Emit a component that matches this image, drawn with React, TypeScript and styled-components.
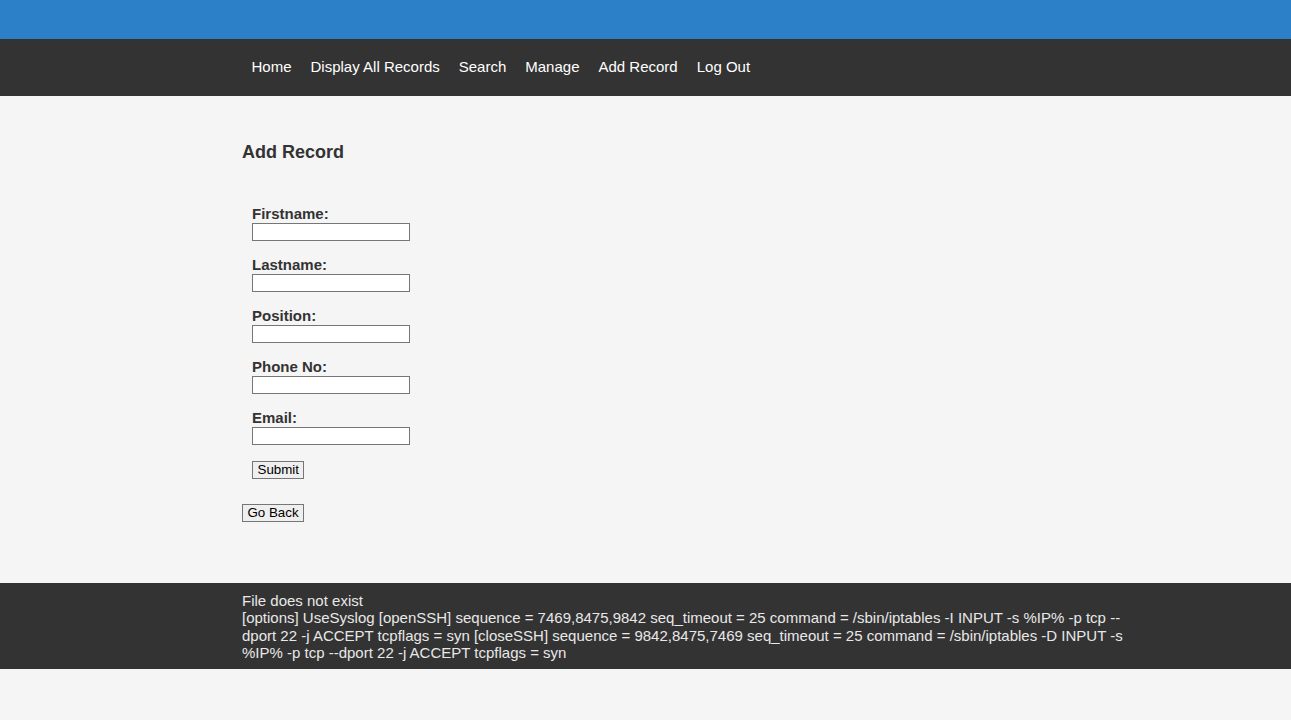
import React from "react";
import styled, { createGlobalStyle } from "styled-components";

const GlobalStyle = createGlobalStyle`
  html, body {
    margin: 0;
    padding: 0;
    background: #f5f5f5;
    font-family: "Liberation Sans", Arial, sans-serif;
    color: #333;
  }
`;

const TopBar = styled.div`
  height: 39px;
  background: #2b80c7;
`;

const Nav = styled.nav`
  box-sizing: border-box;
  height: 57px;
  padding-bottom: 2px;
  background: #333333;
  display: flex;
  align-items: center;
`;

const Container = styled.div`
  width: 900px;
  margin-left: 242px;
`;

const NavList = styled.ul`
  list-style: none;
  margin: 0;
  padding: 0;
  display: flex;
  align-items: center;
`;

const NavLink = styled.a`
  display: block;
  padding: 0 9.5px;
  color: #ffffff;
  font-size: 15px;
  line-height: 17px;
  text-decoration: none;
`;

const Main = styled.main`
  padding: 46px 0 61px;
`;

const Heading = styled.h3`
  margin: 0;
  font-size: 18px;
  line-height: 21px;
  font-weight: bold;
  color: #333;
`;

const Form = styled.form`
  margin-top: 42px;
  padding-left: 10px;
  display: flex;
  flex-direction: column;
  align-items: flex-start;
`;

const Field = styled.div`
  display: flex;
  flex-direction: column;
  align-items: flex-start;
  margin-bottom: 15px;
`;

const Label = styled.label`
  font-size: 15px;
  line-height: 17px;
  font-weight: bold;
  color: #333;
  margin-bottom: 1px;
`;

const Input = styled.input`
  box-sizing: border-box;
  width: 158px;
  height: 18px;
  margin: 0;
  padding: 1px 2px;
  border: 1px solid #767676;
  background: #ffffff;
  font-family: "Liberation Sans", Arial, sans-serif;
  font-size: 13.33px;
`;

const Button = styled.button<{ $gap?: number }>`
  box-sizing: border-box;
  height: 18px;
  margin: ${(p) => p.$gap ?? 0}px 0 0;
  padding: 0 4.5px;
  border: 1px solid #767676;
  border-radius: 0;
  background: #efefef;
  color: #000;
  font-family: "Liberation Sans", Arial, sans-serif;
  font-size: 13.33px;
  line-height: 14px;
  cursor: pointer;
`;

const Footer = styled.footer`
  background: #333333;
  padding: 9px 0 8px;
`;

const FooterText = styled.div`
  color: #e8e8e8;
  font-size: 15px;
  line-height: 17.25px;
`;

const links = ["Home", "Display All Records", "Search", "Manage", "Add Record", "Log Out"];
const fields = ["Firstname:", "Lastname:", "Position:", "Phone No:", "Email:"];

export default function App() {
  return (
    <>
      <GlobalStyle />
      <TopBar />
      <Nav>
        <Container>
          <NavList>
            {links.map((l) => (
              <li key={l}>
                <NavLink href="#">{l}</NavLink>
              </li>
            ))}
          </NavList>
        </Container>
      </Nav>
      <Main>
        <Container>
          <Heading>Add Record</Heading>
          <Form onSubmit={(e) => e.preventDefault()}>
            {fields.map((f) => (
              <Field key={f}>
                <Label>{f}</Label>
                <Input type="text" />
              </Field>
            ))}
            <Button type="submit" $gap={1}>Submit</Button>
          </Form>
          <Button type="button" $gap={25}>Go Back</Button>
        </Container>
      </Main>
      <Footer>
        <Container>
          <FooterText>File does not exist</FooterText>
          <FooterText>
            [options] UseSyslog [openSSH] sequence = 7469,8475,9842 seq_timeout = 25 command = /sbin/iptables -I INPUT -s %IP% -p tcp --dport 22 -j ACCEPT tcpflags = syn [closeSSH] sequence = 9842,8475,7469 seq_timeout = 25 command = /sbin/iptables -D INPUT -s %IP% -p tcp --dport 22 -j ACCEPT tcpflags = syn
          </FooterText>
        </Container>
      </Footer>
    </>
  );
}
